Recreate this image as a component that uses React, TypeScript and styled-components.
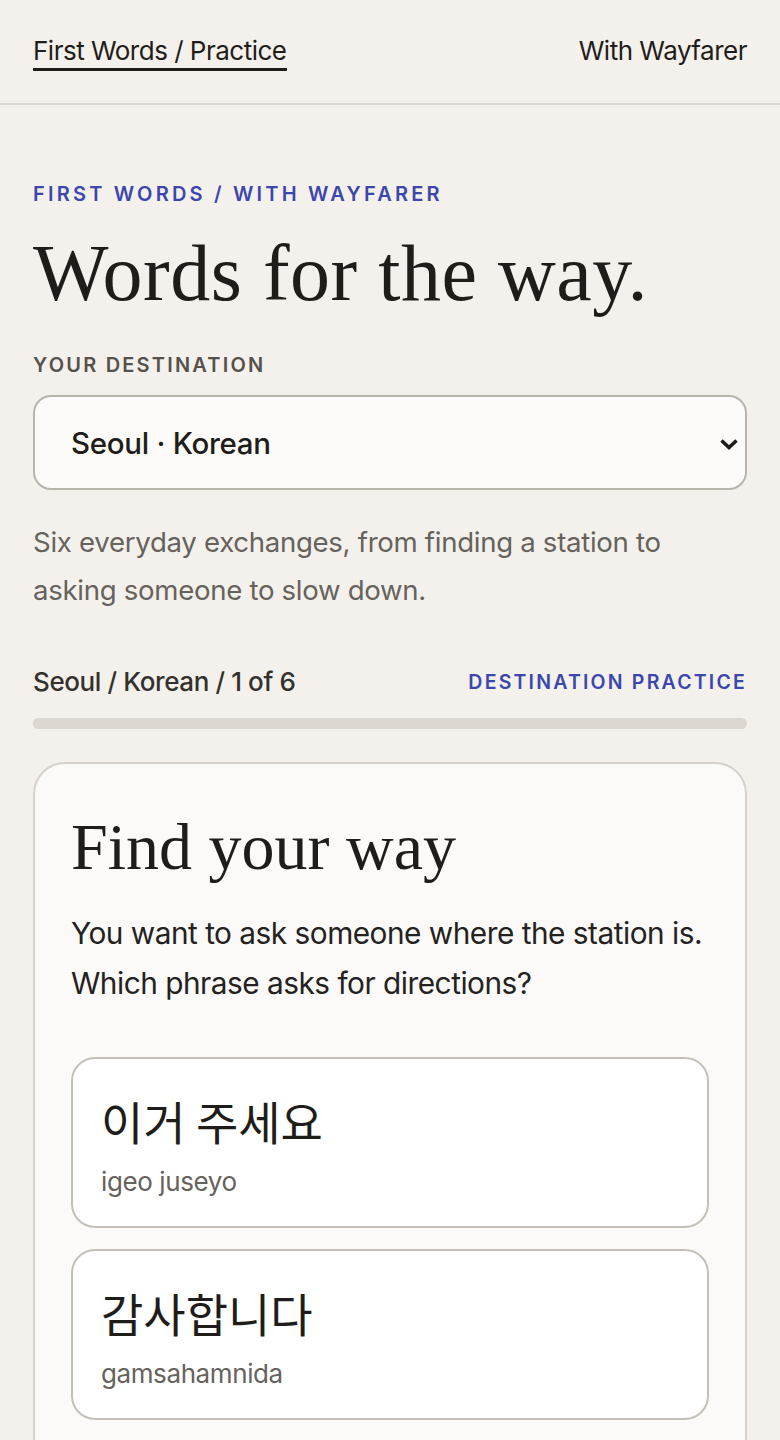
import React, { useState } from 'react';
import styled, { createGlobalStyle } from 'styled-components';

const GlobalStyle = createGlobalStyle`
  * { box-sizing: border-box; }
  body {
    margin: 0;
    background: #f4f1ec;
    color: #1f1d1a;
    font-family: Inter, "Noto Sans", "Noto Sans CJK KR", sans-serif;
  }
`;

const SERIF = `"Liberation Serif", "DejaVu Serif", serif`;
const KOREAN = `"Noto Sans CJK KR", "Noto Sans", sans-serif`;

const Header = styled.header`
  display: flex;
  justify-content: space-between;
  align-items: center;
  height: 105px;
  padding: 6px 33px 0;
  border-bottom: 2px solid #dcd8d1;
`;

const NavLink = styled.a<{ active?: boolean }>`
  font-size: 26px;
  line-height: 1;
  letter-spacing: -0.5px;
  color: #1f1d1a;
  text-decoration: none;
  padding-bottom: 4px;
  border-bottom: 3px solid ${p => (p.active ? '#1f1d1a' : 'transparent')};
`;

const Main = styled.main`
  padding: 77px 33px 0;
`;

const Eyebrow = styled.div<{ tone?: 'blue' | 'gray'; size?: number; spacing?: number }>`
  font-size: ${p => p.size ?? 20}px;
  font-weight: 600;
  letter-spacing: ${p => p.spacing ?? 2.2}px;
  text-transform: uppercase;
  color: ${p => (p.tone === 'gray' ? '#55514b' : '#3b47ad')};
`;

const Title = styled.h1`
  margin: 23px 0 36px;
  font-family: ${SERIF};
  font-weight: 400;
  font-size: 80px;
  line-height: 1.1;
  letter-spacing: 0.5px;
`;

const SelectWrap = styled.div`
  position: relative;
  margin-top: 18px;
`;

const Select = styled.select`
  display: block;
  width: 100%;
  height: 95px;
  padding: 0 44px 0 36px;
  border: 2px solid #b9b5ad;
  border-radius: 18px;
  background: #fcfbf9;
  color: #1f1d1a;
  font-family: inherit;
  font-size: 29.5px;
  font-weight: 500;
  letter-spacing: -0.3px;
  appearance: none;
  -webkit-appearance: none;
`;

const Chevron = styled.svg`
  position: absolute;
  right: 8px;
  top: 50%;
  width: 20px;
  height: 12px;
  margin-top: -5px;
  pointer-events: none;
`;

const Lede = styled.p`
  max-width: 680px;
  margin: 28px 0 0;
  font-size: 27.6px;
  line-height: 48px;
  letter-spacing: -0.3px;
  color: #66625c;
`;

const ProgressRow = styled.div`
  display: flex;
  justify-content: space-between;
  align-items: center;
  margin-top: 52px;
`;

const ProgressLabel = styled.span`
  font-size: 26px;
  font-weight: 500;
  letter-spacing: -0.4px;
  color: #34312d;
`;

const Track = styled.div`
  height: 11px;
  margin-top: 21px;
  border-radius: 6px;
  background: #dcd7d0;
  overflow: hidden;
`;

const Fill = styled.div`
  height: 100%;
  background: #dcd7d0;
`;

const Card = styled.section`
  margin-top: 33px;
  padding: 47px 36px 40px;
  border: 2px solid #d6d2ca;
  border-radius: 32px;
  background: #fbfaf8;
`;

const CardTitle = styled.h2`
  margin: 0;
  font-family: ${SERIF};
  font-weight: 400;
  font-size: 66px;
  line-height: 1.1;
`;

const Prompt = styled.p`
  margin: 24px 0 0;
  font-size: 29.8px;
  line-height: 50px;
  letter-spacing: -0.5px;
  color: #24221f;
`;

const Options = styled.div`
  display: flex;
  flex-direction: column;
  gap: 21px;
  margin-top: 49px;
`;

const Option = styled.button<{ selected?: boolean }>`
  display: flex;
  flex-direction: column;
  align-items: flex-start;
  gap: 18px;
  width: 100%;
  min-height: 169px;
  padding: 34px 28px 29px;
  border: 2px solid ${p => (p.selected ? '#3b47ad' : '#c4c0b8')};
  border-radius: 24px;
  background: #ffffff;
  text-align: left;
  cursor: pointer;
  font-family: inherit;
`;

const Native = styled.span`
  font-family: ${KOREAN};
  font-size: 46px;
  line-height: 1.2;
  color: #1f1d1a;
`;

const Roman = styled.span`
  font-size: 26px;
  letter-spacing: -0.4px;
  color: #66625c;
`;

const phrases = [
  { native: '이거 주세요', roman: 'igeo juseyo' },
  { native: '감사합니다', roman: 'gamsahamnida' },
  { native: '역이 어디예요?', roman: 'yeogi eodiyeyo?' },
  { native: '천천히 말해 주세요', roman: 'cheoncheonhi malhae juseyo' },
];

export default function App() {
  const [picked, setPicked] = useState<number | null>(null);
  const step = 1;
  const total = 6;

  return (
    <>
      <GlobalStyle />
      <Header>
        <NavLink href="#" active>First Words / Practice</NavLink>
        <NavLink href="#">With Wayfarer</NavLink>
      </Header>
      <Main>
        <Eyebrow spacing={3.2}>First Words / With Wayfarer</Eyebrow>
        <Title>Words for the way.</Title>
        <Eyebrow tone="gray">Your destination</Eyebrow>
        <SelectWrap>
          <Select defaultValue="seoul">
            <option value="seoul">Seoul · Korean</option>
            <option value="tokyo">Tokyo · Japanese</option>
            <option value="lisbon">Lisbon · Portuguese</option>
          </Select>
          <Chevron viewBox="0 0 20 12" aria-hidden="true">
            <path d="M2.5 2.5 L10 9.5 L17.5 2.5" fill="none" stroke="#1f1d1a" strokeWidth="3.6" />
          </Chevron>
        </SelectWrap>
        <Lede>Six everyday exchanges, from finding a station to asking someone to slow down.</Lede>
        <ProgressRow>
          <ProgressLabel>Seoul / Korean / {step} of {total}</ProgressLabel>
          <Eyebrow size={19.5} spacing={2.2}>Destination practice</Eyebrow>
        </ProgressRow>
        <Track>
          <Fill style={{ width: `${(step / total) * 100}%` }} />
        </Track>
        <Card>
          <CardTitle>Find your way</CardTitle>
          <Prompt>You want to ask someone where the station is. Which phrase asks for directions?</Prompt>
          <Options>
            {phrases.map((p, i) => (
              <Option key={p.roman} selected={picked === i} onClick={() => setPicked(i)}>
                <Native>{p.native}</Native>
                <Roman>{p.roman}</Roman>
              </Option>
            ))}
          </Options>
        </Card>
      </Main>
    </>
  );
}
